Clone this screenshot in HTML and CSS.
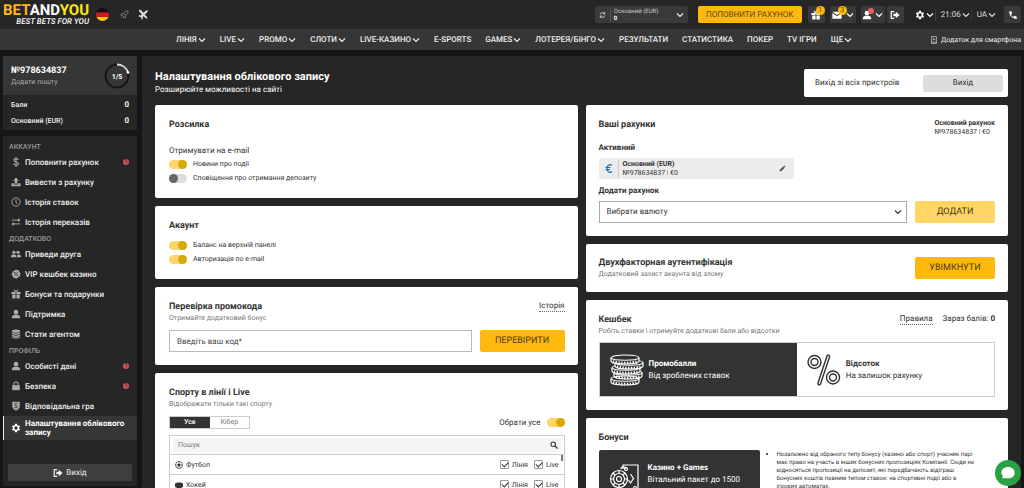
FILE: index.html
```html
<!DOCTYPE html>
<html lang="uk">
<head>
<meta charset="utf-8">
<title>Налаштування облікового запису</title>
<link rel="stylesheet" href="styles.css">
</head>
<body>
<svg class="sprite" aria-hidden="true">
  <symbol id="chev" viewBox="0 0 8 8"><path d="M1 2.5l3 3 3-3" fill="none" stroke="currentColor" stroke-width="1.2"/></symbol>
  <symbol id="gear" viewBox="0 0 24 24"><path fill="currentColor" fill-rule="evenodd" d="M19.4 13a7.500 7.500 0 0 0 0-2l2.300-1.800-2.200-4-2.800 1.200a8 8 0 0 0-1.700-1L14.500 2h-5L9 5.400a8 8 0 0 0-1.700 1L4.500 5.200l-2.200 4L4.600 11a7.500 7.500 0 0 0 0 2l-2.300 1.800 2.200 4 2.800-1.200a8 8 0 0 0 1.700 1l.5 3.400h5l.5-3.400a8 8 0 0 0 1.700-1l2.800 1.200 2.200-4zM12 16a4 4 0 1 1 0-8 4 4 0 0 1 0 8z"/></symbol>
  <symbol id="exit" viewBox="0 0 24 24"><path d="M10 4H3v16h7" fill="none" stroke="currentColor" stroke-width="3"/><path fill="currentColor" d="M8 9h6V4l9 8-9 8v-5H8z"/></symbol>
  <symbol id="gift" viewBox="0 0 24 24"><path fill="currentColor" d="M1 7h10v5H1zM13 7h10v5H13zM3 13h8v10H3zM13 13h8v10h-8z"/><path d="M12 7C7 7 6 2 9 2.500c2 .5 3 4.500 3 4.500s1-4 3-4.500c3-.5 2 4.500-3 4.500z" fill="none" stroke="currentColor" stroke-width="2"/></symbol>
  <symbol id="user" viewBox="0 0 24 24"><circle cx="12" cy="7.500" r="5.500" fill="currentColor"/><path fill="currentColor" d="M2 22v-3c0-4 5-5.500 10-5.500S22 15 22 19v3z"/></symbol>
</svg>

<header class="top">
  <a class="logo" href="#"><span class="logo-name"><b class="gold">BET</b><b>AND</b><b class="lemon">YOU</b></span><span class="logo-tag">BEST BETS FOR YOU</span></a>
  <svg class="flag" viewBox="0 0 13 13"><clipPath id="round"><circle cx="6.500" cy="6.500" r="6.500"/></clipPath><g clip-path="url(#round)"><path fill="#111" d="M0 0h13v4.500H0z"/><path fill="#d8141c" d="M0 4.500h13V9H0z"/><path fill="#fc0" d="M0 9h13v4H0z"/></g></svg>
  <svg class="rocket" viewBox="0 0 16 16"><path d="M14.500 1.500c-4 0-6 1.500-8 4.500l3.500 3.500c3-2 4.500-4 4.500-8zM6.500 6L3 6.500 1.500 9l3 .5M10 9.500L9.500 13 7 14.500l-.5-3M4.500 9.500l2 2M2 14l2-2" fill="none" stroke="currentColor" stroke-width="1.500"/></svg>
  <svg class="plane" viewBox="0 0 20 20"><path fill="currentColor" d="M2 1l3 1 5 5 4-4 3-1 1 1-2 4-4 3 5 5-1 3-6-5-2 2 1 3-2 1-2-4-4-2 1-2 3 1 2-2-5-6z"/></svg>

  <div class="top-right">
    <button class="balance"><svg class="i8" viewBox="0 0 16 16"><path d="M2.500 7a5.500 5.500 0 0 1 10-2M13.500 9a5.500 5.500 0 0 1-10 2M13 1v4.500H9M3 15v-4.500h4" fill="none" stroke="currentColor" stroke-width="1.600"/></svg><span class="balance-text"><span>Основний (EUR)</span><b>0</b></span><svg class="i8"><use href="#chev"/></svg></button>
    <button class="deposit">ПОПОВНИТИ РАХУНОК</button>
    <button class="sq" aria-label="Бонуси"><svg class="i10"><use href="#gift"/></svg><span class="badge">1</span></button>
    <button class="sq wide" aria-label="Повідомлення"><svg class="i10" viewBox="0 0 24 24"><path fill="currentColor" d="M1 4h22l-11 8zM1 7l11 8 11-8v14H1z"/></svg><span class="badge">3</span><svg class="i8"><use href="#chev"/></svg></button>
    <button class="sq wide user" aria-label="Профіль"><svg class="i10"><use href="#user"/></svg><span class="badge red"></span><svg class="i8"><use href="#chev"/></svg></button>
    <button class="sq logout" aria-label="Вихід"><svg class="i10"><use href="#exit"/></svg></button>
    <button class="plain gear" aria-label="Налаштування"><svg class="i10"><use href="#gear"/></svg><svg class="i8"><use href="#chev"/></svg></button>
    <button class="plain line">21:06<svg class="i8"><use href="#chev"/></svg></button>
    <button class="plain line">UA<svg class="i8"><use href="#chev"/></svg></button>
    <button class="sq phone" aria-label="Телефон"><svg class="i10" viewBox="0 0 24 24"><path fill="currentColor" d="M3 3h5l2 6-3 2c1.500 3 3 4.500 6 6l2-3 6 2v5c-9 1.500-19.500-9-18-18z"/></svg></button>
  </div>
</header>

<nav class="nav">
  <a href="#">ЛІНІЯ<svg class="i8"><use href="#chev"/></svg></a>
  <a href="#">LIVE<svg class="i8"><use href="#chev"/></svg></a>
  <a href="#">PROMO<svg class="i8"><use href="#chev"/></svg></a>
  <a href="#">СЛОТИ<svg class="i8"><use href="#chev"/></svg></a>
  <a href="#">LIVE-КАЗИНО<svg class="i8"><use href="#chev"/></svg></a>
  <a href="#">E-SPORTS</a>
  <a href="#">GAMES<svg class="i8"><use href="#chev"/></svg></a>
  <a href="#">ЛОТЕРЕЯ/БІНГО<svg class="i8"><use href="#chev"/></svg></a>
  <a href="#">РЕЗУЛЬТАТИ</a>
  <a href="#">СТАТИСТИКА</a>
  <a href="#">ПОКЕР</a>
  <a href="#">TV ІГРИ</a>
  <a href="#">ЩЕ<svg class="i8"><use href="#chev"/></svg></a>
  <a class="app" href="#"><svg class="i8" viewBox="0 0 16 20"><path d="M2 1h12v18H2zM2 15.500h12M8 4v6M5.500 8L8 10.500 10.500 8" fill="none" stroke="currentColor" stroke-width="1.500"/></svg>Додаток для смартфона</a>
</nav>

<div class="page">
  <aside class="side">
    <section class="profile">
      <div class="profile-head">
        <div><b class="acc">№978634837</b><a class="mail" href="#">Додати пошту</a></div>
        <div class="ring"><svg viewBox="0 0 26 26"><circle cx="13" cy="13" r="11.500" fill="none" stroke="#161616" stroke-width="2"/><path d="M13 1.500A11.500 11.500 0 0 1 24 9.500" fill="none" stroke="#ddd" stroke-width="2"/><circle cx="24" cy="9.500" r="1.300" fill="#fff"/><text x="13" y="15.500" text-anchor="middle">1/5</text></svg></div>
      </div>
      <dl class="sums">
        <div><dt>Бали</dt><dd>0</dd></div>
        <div><dt>Основний (EUR)</dt><dd>0</dd></div>
      </dl>
    </section>
    <section class="menu">
      <h2>АККАУНТ</h2>
      <a href="#"><svg class="i10" viewBox="0 0 24 24"><path d="M18 7c-1-3-11-4-11.500.5C6 12.500 18 11 18 16c0 5-11 4.500-12.500 0M12 0v24" fill="none" stroke="currentColor" stroke-width="2.600"/></svg>Поповнити рахунок<span class="warn">!</span></a>
      <a href="#"><svg class="i10" viewBox="0 0 24 24"><path fill="currentColor" d="M12 1l7 8h-4v7H9V9H5zM1 15h6v3h10v-3h6v7H1z"/></svg>Вивести з рахунку</a>
      <a href="#"><svg class="i10" viewBox="0 0 24 24"><circle cx="12" cy="12" r="10" fill="none" stroke="currentColor" stroke-width="2.200"/><path d="M12 5.500V13l4 3" fill="none" stroke="currentColor" stroke-width="2.200"/></svg>Історія ставок</a>
      <a href="#"><svg class="i10" viewBox="0 0 24 24"><path d="M2 7.500h17M5 16.500h17" fill="none" stroke="currentColor" stroke-width="2.200"/><path fill="currentColor" d="M17 3l6 4.500-6 4.500zM7 12l-6 4.500L7 21z"/></svg>Історія переказів</a>
      <h2>ДОДАТКОВО</h2>
      <a href="#"><svg class="i10" viewBox="0 0 24 24"><g fill="currentColor"><circle cx="7" cy="8" r="4"/><circle cx="17" cy="8" r="4"/><path d="M0 20v-3c0-5 13-5 13 0v3zM14.500 20v-5c3-2 9.500-1 9.500 2v3z"/></g></svg>Приведи друга</a>
      <a href="#"><svg class="i10" viewBox="0 0 24 24"><path fill="currentColor" d="M12 1l3 2h4l1 4 3 3-1 4-1 4-4 2-3 3-4-1-4-1-2-4-3-3 2-4 1-4 4-2z"/><path d="M8 16l8-8" stroke="#262626" stroke-width="2"/><circle cx="9" cy="9" r="1.800" fill="#262626"/><circle cx="15" cy="15" r="1.800" fill="#262626"/></svg>VIP кешбек казино</a>
      <a href="#"><svg class="i10"><use href="#gift"/></svg>Бонуси та подарунки</a>
      <a href="#"><svg class="i10"><use href="#user"/></svg>Підтримка</a>
      <a href="#"><svg class="i10" viewBox="0 0 24 24"><g fill="currentColor"><ellipse cx="12" cy="5" rx="10" ry="4"/><path d="M2 8c4 3.500 16 3.500 20 0v3c-2 4-18 4-20 0zM2 13c4 3.500 16 3.500 20 0v3c-2 4-18 4-20 0zM2 18c4 3.500 16 3.500 20 0v2c-2 4-18 4-20 0z"/></g></svg>Стати агентом</a>
      <h2>ПРОФІЛЬ</h2>
      <a href="#"><svg class="i10"><use href="#user"/></svg>Особисті дані<span class="warn">!</span></a>
      <a href="#"><svg class="i10" viewBox="0 0 24 24"><path fill="currentColor" d="M3 10h18v12H3z"/><path d="M7 11V7c0-6 10-6 10 0v4" fill="none" stroke="currentColor" stroke-width="2.600"/></svg>Безпека<span class="warn">!</span></a>
      <a href="#"><svg class="i10" viewBox="0 0 24 24"><path fill="currentColor" d="M3 2h18v11c0 5-5 8-9 10-4-2-9-5-9-10z"/><path d="M15.500 7c-2-2-7-1.500-7 1.500s7 2 7 5-5 4-7.500 1.500" fill="none" stroke="#262626" stroke-width="2"/></svg>Відповідальна гра</a>
      <a class="active" href="#"><svg class="i10"><use href="#gear"/></svg>Налаштування облікового запису</a>
      <button class="side-exit"><svg class="i10"><use href="#exit"/></svg>Вихід</button>
    </section>
  </aside>

  <main class="main">
    <div class="head">
      <div><h1>Налаштування облікового запису</h1><p>Розширюйте можливості на сайті</p></div>
      <div class="exit-all"><span>Вихід зі всіх пристроїв</span><button>Вихід</button></div>
    </div>
    <div class="cols">
      <div class="col">
        <section class="card">
          <h3>Розсилка</h3>
          <p class="lead">Отримувати на e-mail</p>
          <label class="tog"><input class="switch" type="checkbox" checked>Новини про події</label>
          <label class="tog"><input class="switch" type="checkbox">Сповіщення про отримання депозиту</label>
        </section>
        <section class="card">
          <h3 class="tight">Акаунт</h3>
          <label class="tog"><input class="switch" type="checkbox" checked>Баланс на верхній панелі</label>
          <label class="tog"><input class="switch" type="checkbox" checked>Авторизація по e-mail</label>
        </section>
        <section class="card">
          <div class="row"><h3>Перевірка промокода</h3><a class="dotted" href="#">Історія</a></div>
          <p class="sub">Отримайте додатковий бонус</p>
          <div class="form"><input class="field" type="text" aria-label="Введіть ваш код" placeholder="Введіть ваш код*"><button class="btn check">ПЕРЕВІРИТИ</button></div>
        </section>
        <section class="card">
          <h3>Спорту в лінії і Live</h3>
          <p class="sub">Відображати тільки такі спорту</p>
          <div class="row tabs-row"><div class="tabs"><button class="on">Усе</button><button>Кібер</button></div><label class="all">Обрати усе<input class="switch" type="checkbox" checked></label></div>
          <div class="list">
            <div class="search"><input type="text" aria-label="Пошук" placeholder="Пошук"><svg class="i8" viewBox="0 0 16 16"><circle cx="6.500" cy="6.500" r="4.500" fill="none" stroke="currentColor" stroke-width="2.200"/><path d="M10 10l5 5" stroke="currentColor" stroke-width="2.600"/></svg></div>
            <div class="sport first"><svg class="i8" viewBox="0 0 16 16"><circle cx="8" cy="8" r="7" fill="#fff" stroke="currentColor" stroke-width="1.300"/><path fill="currentColor" d="M8 4.500l3.500 2.500-1.300 4H5.800L4.500 7zM5.500 1h5L8 3zM1 6l2 1.500L2 11zM15 6l-2 1.500 1 3.500zM4 14l1-2 2 3zM12 14l-1-2-2 3z"/></svg><span>Футбол</span><label><input class="tick" type="checkbox" checked>Лінія</label><label><input class="tick" type="checkbox" checked>Live</label></div>
            <div class="sport"><svg class="i8" viewBox="0 0 16 16"><path fill="currentColor" d="M0 5c2-3 14-3 16 0v6c-2 4-14 4-16 0z"/></svg><span>Хокей</span><label><input class="tick" type="checkbox" checked>Лінія</label><label><input class="tick" type="checkbox" checked>Live</label></div>
          </div>
        </section>
      </div>

      <div class="col accounts">
        <section class="card">
          <div class="row"><h3>Ваші рахунки</h3><div class="mini"><b>Основний рахунок</b><span>№978634837<i></i>€0</span></div></div>
          <h4 class="act">Активний</h4>
          <div class="account"><svg class="euro" viewBox="0 0 16 20"><path d="M14 4C10 0 4 3 4 10s6 10 10 6M1 8h10M1 12h9" fill="none" stroke="currentColor" stroke-width="2.400"/></svg><div class="mini"><b>Основний (EUR)</b><span>№978634837<i></i>€0</span></div><svg class="pen" viewBox="0 0 16 16"><path fill="currentColor" d="M1 15l1-4 8-8 3 3-8 8zM11 2l2-1 2 2-1 2z"/></svg></div>
          <h4 class="add"><label for="cur">Додати рахунок</label></h4>
          <div class="form"><div class="select"><select id="cur"><option>Вибрати валюту</option></select><svg class="i8"><use href="#chev"/></svg></div><button class="btn pale">ДОДАТИ</button></div>
        </section>
        <section class="card two">
          <div><h3>Двухфакторная аутентифікація</h3><p class="sub">Додатковий захист акаунта від злому</p></div><button class="btn">УВІМКНУТИ</button>
        </section>
        <section class="card">
          <div class="row"><h3>Кешбек</h3><div class="rules"><a class="dotted" href="#">Правила</a><span>Зараз балів: <b>0</b></span></div></div>
          <p class="sub">Робіть ставки і отримуйте додаткові бали або відсотки</p>
          <div class="choice">
            <button class="dark"><svg class="pic" viewBox="0 0 34 32"><g fill="none" stroke="currentColor" stroke-width="1.200"><path d="M1 25c0-4 28-4 28 0v3c0 4-28 4-28 0zM4 19c0-4 28-4 28 0v3c0 4-28 4-28 0z"/><path fill="#333" d="M2 14c0-4 28-4 28 0v3c0 4-28 4-28 0z"/><path fill="#333" d="M5 9c0-4 28-4 28 0v3c0 4-28 4-28 0z"/><path fill="#333" d="M1 4c0-4 28-4 28 0v3c0 4-28 4-28 0z"/><path d="M1 4c2 3 26 3 28 0M5 9c2 3 26 3 28 0M2 14c2 3 26 3 28 0M4 19c2 3 26 3 28 0M1 25c2 3 26 3 28 0"/></g><path d="M3 7.500c6 2 18 2 24 0M7 12.500c6 2 18 2 24 0M4 17.500c6 2 18 2 24 0M6 22.500c6 2 18 2 24 0M3 28.500c6 2 18 2 24 0" fill="none" stroke="currentColor" stroke-width="2.600" stroke-dasharray="1.300 1.500"/></svg><span><b>Промобалли</b>Від зроблених ставок</span></button>
            <button><svg class="pic" viewBox="0 0 34 32"><g fill="none" stroke="currentColor" stroke-width="1.400"><circle cx="7.500" cy="8" r="6.500"/><circle cx="7.500" cy="8" r="3.500"/><circle cx="26" cy="23.500" r="6.500"/><circle cx="26" cy="23.500" r="3.500"/><path d="M20 2c.5-1.500 3-1 2.500 1L13.500 30c-.5 1.500-3 1-2.500-1z"/></g></svg><span><b>Відсоток</b>На залишок рахунку</span></button>
          </div>
        </section>
        <section class="card">
          <h3>Бонуси</h3>
          <div class="bonus">
            <div class="tile"><svg class="pic" viewBox="0 0 34 32"><g fill="none" stroke="currentColor" stroke-width="1.200"><path d="M14 5V1h15v27h-9M14 1v4M12 5c0-3 5-3 5 0"/><circle cx="10" cy="15" r="8.500"/><circle cx="10" cy="15" r="5.500"/><circle cx="10" cy="15" r="2.500"/><path d="M10 6.500v3M10 20.500v3M1.500 15h3M15.500 15h3M4 9l2 2M14 19l2 2M4 21l2-2M14 11l2-2M21.500 10l3 4.500-3 4.500-2-3M3 32c0-10 14-10 14 0"/><circle cx="10" cy="30" r="3"/><circle cx="17" cy="5" r="1.500"/><circle cx="26" cy="24" r="1.500"/></g></svg><span><b>Казино + Games</b>Вітальний пакет до 1500 EUR + 150 FS</span></div>
            <ul><li>Незалежно від обраного типу бонусу (казино або спорт) учасник парі має право на участь в інших бонусних пропозиціях Компанії. Сюди не відносяться пропозиції на депозит, які передбачають відіграш бонусних коштів певним типом ставок: на спортивні події або в ігрових автоматах.</li></ul>
          </div>
        </section>
      </div>
    </div>
  </main>
</div>
<button class="chat" aria-label="Чат"><svg viewBox="0 0 24 24"><path fill="#fff" d="M12 3c6 0 10 3.500 10 8.500S18 20 12 20H3l1.500-3.500C3 15 2 13.500 2 11.500 2 6.500 6 3 12 3z"/></svg></button>
</body>
</html>
```

FILE: styles.css
```css
* { box-sizing: border-box; margin: 0; padding: 0; }
html, body { height: 100%; }
body {
  display: flex;
  flex-direction: column;
  overflow: hidden;
  background: #161616;
  color: #333;
  font: 8px/12px Roboto, "Noto Sans", sans-serif;
  text-rendering: geometricPrecision;
}
button, input, select { font: inherit; color: inherit; border: 0; background: none; border-radius: 0; text-rendering: inherit; }
button { cursor: pointer; }
a { color: inherit; text-decoration: none; }
svg { flex: none; display: block; }
b { font-weight: 700; }
.sprite { position: absolute; width: 0; height: 0; }
.i8 { width: 8px; height: 8px; }
.i10 { width: 10px; height: 10px; }

/* Top bar */
.top { flex: none; display: flex; align-items: center; height: 29px; padding: 0 3px; background: #262626; color: #eee; }
.logo { width: 86px; color: #fff; }
.logo-name { display: block; font: 700 15px/14px Roboto, sans-serif; }
.logo-tag { display: block; text-align: right; font: italic 500 8px/9px Roboto, sans-serif; }
.gold { color: #fcb813; }
.lemon { color: #fde614; }
.flag { width: 13px; height: 13px; margin: 0 11px 0 7px; }
.rocket { width: 9px; height: 9px; color: #888; }
.plane { width: 11px; height: 11px; margin-left: 9px; color: #ddd; }
.top-right { display: flex; align-items: center; margin-left: auto; }
.balance { display: flex; align-items: center; gap: 4px; width: 93px; height: 17px; padding: 0 4px; background: #3a3a3a; border-radius: 2px; text-align: left; }
.balance > .i8:first-child { width: 7px; }
.balance-text { display: flex; flex: 1; flex-direction: column; padding-left: 3px; border-left: 1px solid #555; font-size: 6px; line-height: 7px; color: #ccc; }
.balance-text b { color: #fff; }
.deposit { width: 104px; height: 17px; margin: 0 6px 0 10px; background: #ffb80c; border-radius: 2px; color: #5c470d; font-size: 8px; }
.sq { position: relative; display: flex; align-items: center; justify-content: center; width: 17px; height: 17px; margin-right: 5px; background: #3a3a3a; border-radius: 2px; color: #fff; }
.sq.wide { width: 26px; gap: 4px; }
.sq.user { width: 24px; margin-right: 2px; gap: 3px; }
.sq.logout { margin-right: 11px; }
.sq.phone { margin: 0 0 0 8px; }
.badge { position: absolute; top: 0; left: 8px; width: 9px; height: 9px; border-radius: 5px; background: #ffb80c; color: #5c470d; font-size: 7px; line-height: 9px; text-align: center; }
.badge.red { top: 2px; left: 7px; width: 6px; height: 6px; background: #e66060; }
.plain { display: flex; align-items: center; gap: 1px; color: #ddd; }
.plain.gear { color: #fff; }
.plain.line { margin-left: 1px; padding-left: 5px; border-left: 1px solid #3a3a3a; }

/* Navigation */
.nav { flex: none; display: flex; align-items: center; gap: 14px; height: 21px; padding: 0 3px 0 176px; background: #363636; color: #eee; font-weight: 500; white-space: nowrap; }
.nav a { display: flex; align-items: center; gap: 1px; }
.nav .app { margin-left: auto; gap: 3px; font-weight: 400; font-size: 7px; }

.page { flex: 1; min-height: 0; display: flex; align-items: flex-start; gap: 5px; padding: 6px 3px 0; }

/* Sidebar */
.side { flex: none; width: 134px; color: #eee; }
.profile { padding-bottom: 1px; background: #262626; margin-bottom: 6px; }
.profile-head { display: flex; justify-content: space-between; align-items: center; height: 39px; padding: 0 7px 0 8px; background: #363636; }
.acc { display: block; font-size: 9px; color: #fff; }
.mail { display: block; font-size: 7px; line-height: 10px; color: #aaa; }
.ring svg { width: 26px; height: 26px; }
.ring text { font: 700 7px Roboto, sans-serif; fill: #fff; }
.sums { padding: 2px 8px 0; font-size: 7px; font-weight: 500; }
.sums div { display: flex; justify-content: space-between; line-height: 16px; }
.sums dd { font-size: 8px; font-weight: 700; }
.menu { padding: 7px 0 5px; background: #262626; }
.menu h2 { padding-left: 6px; color: #999; font-size: 7px; font-weight: 500; line-height: 9px; }
.menu a + h2 { padding-top: 3px; }
.menu a { display: flex; align-items: center; gap: 4px; min-height: 20px; padding: 0 8px 0 7px; border-left: 1px solid transparent; font-weight: 500; line-height: 9px; }
.menu a svg { color: #aaa; }
.menu a.active { min-height: 24px; background: #363636; border-color: #eee; color: #fff; font-weight: 700; }
.menu a.active svg { color: #fff; }
.warn { width: 6px; height: 6px; margin-left: auto; border-radius: 3px; background: #c95555; color: #262626; font-size: 6px; font-weight: 700; line-height: 6px; text-align: center; }
.side-exit { display: flex; align-items: center; justify-content: center; gap: 3px; width: 124px; height: 17px; margin: 24px auto 0; background: #3e3e3e; }

/* Content */
.main { flex: 1; min-width: 0; padding: 13px 13px 40px; background: #262626; }
.head { display: flex; justify-content: space-between; align-items: flex-start; margin-bottom: 8px; color: #fff; }
h1 { font-size: 11px; line-height: 15px; font-weight: 700; }
.exit-all { display: flex; align-items: center; justify-content: space-between; width: 204px; height: 28px; padding: 0 5px 0 11px; background: #fff; border-radius: 2px; color: #333; }
.exit-all button { width: 80px; height: 17px; background: #ddd; border-radius: 2px; }
.cols { display: grid; grid-template-columns: 1fr 1fr; gap: 8px; align-items: start; }
.col { display: grid; gap: 8px; min-width: 0; }
.card { padding: 14px 13px 13px 14px; background: #fff; border-radius: 2px; }
.accounts .card { padding-left: 13px; }
h3 { font-size: 9px; line-height: 12px; font-weight: 700; }
h3.tight { margin-bottom: 6px; }
h4 { font-size: 8px; line-height: 12px; font-weight: 700; }
.lead { margin-top: 14px; }
.tog { display: flex; align-items: center; gap: 6px; height: 14px; font-size: 7px; }
.sub { color: #777; font-size: 7px; line-height: 11px; }
.row { display: flex; justify-content: space-between; height: 12px; }
.dotted { height: 11px; border-bottom: 1px dotted #666; line-height: 10px; }
.form { display: flex; gap: 8px; margin-top: 6px; }
.field { flex: 1; min-width: 0; height: 22px; padding: 0 7px; border: 1px solid #bbb; }
::placeholder { color: #444; opacity: 1; }
.btn { flex: none; width: 80px; height: 22px; background: #ffb80c; border-radius: 2px; color: #4a3a12; font-size: 9px; }
.btn.check { width: 85px; }
.btn.pale { background: #ffd666; }
.switch { appearance: none; flex: none; width: 18px; height: 9px; border-radius: 5px; background: #ddd; }
.switch::before { content: ""; display: block; width: 9px; height: 9px; border-radius: 5px; background: #666; }
.switch:checked { background: #ffd666; }
.switch:checked::before { margin-left: 9px; background: #d5a90b; }

.tabs-row { align-items: center; height: 13px; margin: 6px 0; }
.tabs { display: flex; width: 81px; height: 13px; border: 1px solid #ccc; }
.tabs button { flex: 1; color: #777; font-size: 7px; line-height: 11px; }
.tabs .on { background: #333; color: #fff; font-weight: 500; }
.all { display: flex; align-items: center; gap: 6px; }
.list { border: 1px solid #ccc; }
.search { display: flex; align-items: center; height: 14px; margin: 2px 3px; padding: 0 3px 0 5px; background: #f5f5f5; }
.search input { flex: 1; min-width: 0; font-size: 7px; }
.search ::placeholder { color: #777; }
.sport { display: flex; align-items: center; gap: 3px; height: 20px; padding: 0 5px; border-top: 1px solid #ccc; }
.sport span { flex: 1; font-size: 7px; }
.sport label { display: flex; align-items: center; gap: 3px; margin-left: 3px; font-size: 7px; }
.sport.first { background: linear-gradient(#777, #777) right 1px top 0 / 2px 6px no-repeat; }
.tick { appearance: none; width: 9px; height: 9px; border: 1px solid #999; border-radius: 1px; }
.tick:checked::before { content: ""; display: block; width: 5px; height: 3px; margin: 1px; border: solid #333; border-width: 0 0 1px 1px; transform: rotate(-45deg); }

.mini { font-size: 7px; line-height: 9px; }
.mini b, .mini span { display: block; }
.mini i { display: inline-block; width: 1px; height: 5px; margin: 0 2px; background: #aaa; }
.act { margin: 11px 0 4px; }
.account { display: flex; align-items: center; width: 195px; height: 21px; padding: 0 8px 0 6px; background: #ececec; border-radius: 2px; }
.account .mini { flex: 1; margin-left: 5px; padding-left: 4px; border-left: 1px solid #ccc; }
.euro { width: 8px; height: 11px; color: #1b6fa8; }
.pen { width: 7px; height: 7px; color: #555; }
.add { margin: 6px 0 4px; }
.add + .form { margin-top: 0; }
.select { position: relative; display: flex; flex: 1; align-items: center; height: 22px; border: 1px solid #aaa; }
.select select { appearance: none; width: 100%; height: 100%; padding: 0 7px; }
.select svg { position: absolute; right: 4px; pointer-events: none; }
.card.two { display: flex; justify-content: space-between; padding-top: 13px; padding-bottom: 12px; }
.rules { display: flex; gap: 10px; line-height: 10px; }
.choice { display: grid; grid-template-columns: 1fr 1fr; height: 55px; margin-top: 5px; border: 1px solid #ccc; }
.choice button, .tile { display: flex; align-items: center; gap: 5px; padding: 0 10px; text-align: left; }
.choice b, .tile b { display: block; }
.choice span, .tile span { line-height: 12px; }
.choice .dark, .tile { background: #333; color: #fff; }
.pic { width: 34px; height: 32px; }
.bonus { display: flex; gap: 17px; margin-top: 6px; }
.tile { flex: none; width: 161px; height: 60px; border-radius: 2px; }
.bonus ul { flex: 1; padding-right: 17px; font-size: 6px; line-height: 8px; }
.bonus li::marker { color: #222; font-size: 9px; }

.chat { position: fixed; right: 3px; bottom: 2px; width: 26px; height: 26px; padding: 5px; border-radius: 13px; background: #27a343; }
```
